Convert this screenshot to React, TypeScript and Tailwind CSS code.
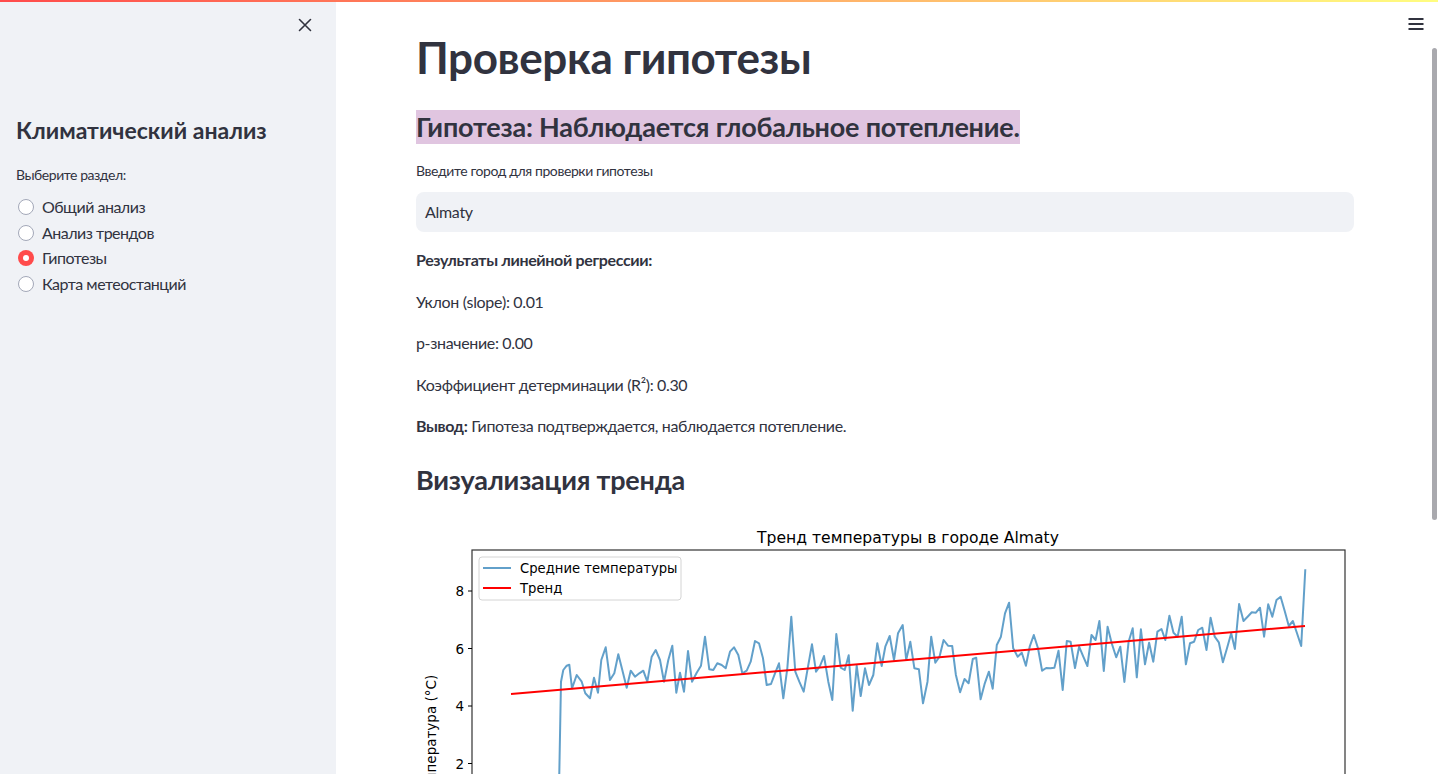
import React from 'react';

const z4: number[][] = [
  [478, 820], [483, 545], [490, 510], [500, 497], [508, 494], [516, 565], [530, 525], [545, 545], [556, 580], [570, 595],
  [582, 533], [594, 578], [604, 480], [617, 442], [630, 540], [643, 520], [655, 463], [667, 510], [680, 563], [692, 512],
  [705, 530], [718, 520], [730, 512], [742, 545], [755, 470], [767, 450], [780, 480], [792, 545], [805, 480], [817, 437],
  [829, 578], [840, 518], [852, 575], [864, 453], [876, 545], [890, 518], [903, 497], [915, 410], [928, 508], [940, 510],
  [952, 490], [965, 495], [977, 505], [990, 455], [1002, 442], [1015, 465], [1027, 520], [1040, 512], [1052, 485], [1065, 423],
  [1077, 430], [1089, 475], [1100, 555], [1113, 552], [1125, 520], [1137, 490], [1150, 595], [1162, 505], [1174, 350], [1186, 515],
  [1198, 545], [1211, 575], [1223, 505], [1236, 433], [1248, 515], [1260, 498], [1272, 468], [1285, 545], [1297, 600], [1309, 402],
  [1322, 503], [1334, 510], [1346, 466], [1358, 632], [1370, 497], [1382, 588], [1395, 505], [1407, 555], [1420, 525], [1432, 430],
  [1445, 498], [1456, 440], [1469, 408], [1482, 480], [1494, 400],
];

const z5: number[][] = [
  [8, 375], [18, 480], [30, 425], [42, 505], [55, 508], [67, 610], [80, 545], [91, 410], [103, 488], [115, 470],
  [127, 420], [140, 437], [152, 438], [163, 525], [175, 577], [188, 537], [200, 550], [212, 477], [222, 473], [235, 598],
  [247, 550], [259, 515], [270, 566], [282, 435], [294, 410], [306, 340], [318, 308], [330, 445], [343, 470], [355, 458],
  [367, 497], [378, 440], [390, 405], [402, 445], [414, 512], [426, 504], [438, 505], [450, 503], [462, 452], [474, 570],
  [486, 423], [497, 425], [510, 504], [522, 440], [534, 470], [546, 498], [558, 405], [570, 420], [581, 363], [594, 513],
  [605, 380], [617, 430], [630, 472], [642, 440], [654, 546], [666, 425], [678, 385], [690, 532], [702, 388], [714, 493],
  [726, 428], [738, 485], [750, 395], [762, 387], [773, 420], [785, 347], [797, 398], [809, 410], [821, 350], [833, 493],
  [845, 430], [857, 425], [869, 390], [881, 383], [893, 450], [905, 353], [917, 410], [929, 427], [941, 487], [953, 445],
  [965, 400], [976, 447], [988, 312], [1001, 363], [1013, 350], [1025, 337], [1037, 338], [1049, 323], [1061, 410], [1073, 313],
  [1085, 350], [1097, 300], [1109, 290], [1121, 333], [1133, 378], [1145, 363], [1157, 400], [1169, 438], [1181, 208],
];

// page coordinates of the plotted series
const series = [
  [512, 840], [520, 836], [528, 842], [536, 838], [544, 845], [552, 839],
  ...z4.map(([x, y]) => [400 + x / 3, 500 + y / 3]),
  ...z5.map(([x, y]) => [900 + x / 2.914, 500 + y / 3]),
];
const seriesPts = series.map(([x, y]) => `${x.toFixed(1)},${y.toFixed(1)}`).join(' ');

const yTicks = [
  { v: '8', y: 591 },
  { v: '6', y: 648.5 },
  { v: '4', y: 706 },
  { v: '2', y: 763.5 },
];

const TrendChart = () => (
  <svg width="938" height="563" viewBox="0 0 938 563" className="block">
    <g transform="translate(-416,-510)" fontFamily="'DejaVu Sans', sans-serif" fill="#000">
      <text x="908" y="543" textAnchor="middle" fontSize="15.6">Тренд температуры в городе Almaty</text>
      <rect x="472" y="550" width="873" height="374" fill="white" stroke="#333" strokeWidth="1.2" />
      {yTicks.map((t) => (
        <g key={t.v}>
          <line x1="468" x2="472" y1={t.y} y2={t.y} stroke="#000" strokeWidth="1" />
          <text x="464" y={t.y + 5} textAnchor="end" fontSize="13.5">{t.v}</text>
        </g>
      ))}
      <text transform="translate(436,737) rotate(-90)" textAnchor="middle" fontSize="13.5">Температура (°C)</text>
      <polyline points={seriesPts} fill="none" stroke="#1f77b4" strokeOpacity="0.7" strokeWidth="2" strokeLinejoin="round" />
      <line x1="511" y1="694" x2="1305" y2="626" stroke="#ff0000" strokeWidth="2" />
      <rect x="479" y="557" width="202" height="43" rx="3" fill="white" fillOpacity="0.8" stroke="#d4d4d4" strokeWidth="1" />
      <line x1="483" x2="511" y1="568" y2="568" stroke="#1f77b4" strokeOpacity="0.7" strokeWidth="2" />
      <text x="520" y="572.5" fontSize="13.2">Средние температуры</text>
      <line x1="483" x2="511" y1="588" y2="588" stroke="#ff0000" strokeWidth="2" />
      <text x="520" y="592.5" fontSize="13.2">Тренд</text>
    </g>
  </svg>
);

const options = ['Общий анализ', 'Анализ трендов', 'Гипотезы', 'Карта метеостанций'];

const Radio = ({ checked }: { checked: boolean }) =>
  checked ? (
    <span className="w-4 h-4 rounded-full bg-[#ff4b4b] flex items-center justify-center shrink-0">
      <span className="w-1.5 h-1.5 rounded-full bg-white" />
    </span>
  ) : (
    <span className="w-4 h-4 rounded-full bg-white border-[1.5px] border-[#a3a8b8] shrink-0" />
  );

const App = () => {
  return (
    <div className="relative h-screen w-full overflow-hidden bg-white text-[#31333f] font-['Lato','Noto_Sans',sans-serif] flex">
      <div className="absolute top-0 left-0 right-0 h-[2px] bg-[linear-gradient(90deg,#ff4b4b,#fffd80)] z-10" />

      <aside className="w-[336px] h-full bg-[#f0f2f6] shrink-0 flex flex-col px-4">
        <div className="flex justify-end pt-[18px] pr-[8px]">
          <svg width="14" height="14" viewBox="0 0 14 14" className="block">
            <path d="M1.5 1.5 L12.5 12.5 M12.5 1.5 L1.5 12.5" stroke="#31333f" strokeWidth="1.6" strokeLinecap="round" />
          </svg>
        </div>
        <h2 className="mt-[82px] text-[23px] leading-[32px] font-bold">Климатический анализ</h2>
        <div className="mt-[19px] text-[14px] leading-[20px] tracking-[-0.45px]">Выберите раздел:</div>
        <div className="mt-[10px] flex flex-col gap-[1.5px]">
          {options.map((o, i) => (
            <div key={o} className="flex items-center gap-[8px] pl-[2px] h-[24px] text-[16px] tracking-[-0.5px]">
              <Radio checked={i === 2} />
              <span>{o}</span>
            </div>
          ))}
        </div>
      </aside>

      <main className="relative flex-1 h-full overflow-hidden">
        <div className="absolute top-[17px] right-[14px]">
          <svg width="16" height="14" viewBox="0 0 16 14" className="block">
            <path d="M0.5 2 H15.5 M0.5 7 H15.5 M0.5 12 H15.5" stroke="#31333f" strokeWidth="1.8" />
          </svg>
        </div>
        <div className="absolute top-[48px] right-[1px] w-[5px] h-[472px] rounded-full bg-[#a9a9ae]" />

        <div className="pl-[80px] w-[1018px] pt-[31px] flex flex-col">
          <h1 className="text-[44px] leading-[52px] font-bold tracking-[-0.4px]">Проверка гипотезы</h1>
          <div className="mt-[27px]">
            <span className="inline-block bg-[#e0c5e0] text-[27px] leading-[34px] font-bold tracking-[-0.2px]">
              Гипотеза: Наблюдается глобальное потепление.
            </span>
          </div>
          <div className="mt-[17px] text-[14px] leading-[20px] tracking-[-0.4px]">Введите город для проверки гипотезы</div>
          <div className="mt-[11px] h-[40px] rounded-lg bg-[#f0f2f6] flex items-center px-[9px] text-[16px] tracking-[-0.3px]">
            Almaty
          </div>

          <div className="mt-[15px] flex flex-col gap-[16px] text-[16px] leading-[25.6px] tracking-[-0.35px]">
            <p className="font-bold">Результаты линейной регрессии:</p>
            <p>Уклон (slope): 0.01</p>
            <p>p-значение: 0.00</p>
            <p>Коэффициент детерминации (R²): 0.30</p>
            <p>
              <span className="font-bold">Вывод:</span> Гипотеза подтверждается, наблюдается потепление.
            </p>
          </div>

          <h3 className="mt-[23px] text-[27px] leading-[36px] font-bold tracking-[-0.2px]">Визуализация тренда</h3>
          <div className="mt-[12px]">
            <TrendChart />
          </div>
        </div>
      </main>
    </div>
  );
};

export default App;
